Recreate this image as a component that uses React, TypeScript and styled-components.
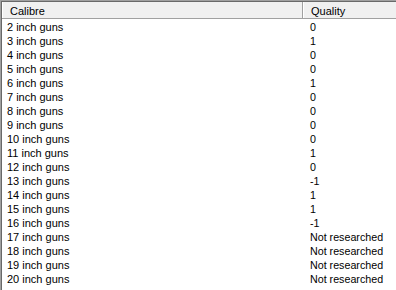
import React from "react";
import styled, { createGlobalStyle } from "styled-components";

const Global = createGlobalStyle`
  html, body { margin: 0; padding: 0; background: #ffffff; }
  body { font-family: "Liberation Sans", Arial, sans-serif; font-size: 11px; }
`;

const ListView = styled.div`
  width: 396px;
  height: 290px;
  box-sizing: border-box;
  overflow: hidden;
  background: #ffffff;
  border-left: 1px solid #a0a0a0;
  border-top: 1px solid #a0a0a0;
  color: #000;
`;

const Inner = styled.div`
  border-left: 1px solid #696969;
  border-top: 1px solid #696969;
  height: 100%;
  box-sizing: border-box;
`;

const Header = styled.div`
  display: grid;
  grid-template-columns: 301px 1fr;
  height: 17px;
  background: #f0f0f0;
  border-bottom: 1px solid #a0a0a0;
  box-sizing: border-box;
`;

const HeaderCell = styled.div<{ $last?: boolean }>`
  padding: 2px 0 0 8px;
  border-right: ${(p) => (p.$last ? "none" : "1px solid #a0a0a0")};
  box-shadow: inset 1px 0 0 #ffffff;
  line-height: 14px;
`;

const Row = styled.div`
  display: grid;
  grid-template-columns: 301px 1fr;
  height: 14px;
  line-height: 14px;
`;

const Cell = styled.div<{ $indent: number; $size: number }>`
  padding-left: ${(p) => p.$indent}px;
  font-size: ${(p) => p.$size}px;
  white-space: nowrap;
`;

const Body = styled.div`
  padding-top: 1px;
`;

const data: [string, string][] = [
  ["2 inch guns", "0"],
  ["3 inch guns", "1"],
  ["4 inch guns", "0"],
  ["5 inch guns", "0"],
  ["6 inch guns", "1"],
  ["7 inch guns", "0"],
  ["8 inch guns", "0"],
  ["9 inch guns", "0"],
  ["10 inch guns", "0"],
  ["11 inch guns", "1"],
  ["12 inch guns", "0"],
  ["13 inch guns", "-1"],
  ["14 inch guns", "1"],
  ["15 inch guns", "1"],
  ["16 inch guns", "-1"],
  ["17 inch guns", "Not researched"],
  ["18 inch guns", "Not researched"],
  ["19 inch guns", "Not researched"],
  ["20 inch guns", "Not researched"],
];

export default function App() {
  return (
    <>
      <Global />
      <ListView>
        <Inner>
          <Header>
            <HeaderCell>Calibre</HeaderCell>
            <HeaderCell $last>Quality</HeaderCell>
          </Header>
          <Body>
            {data.map(([c, q]) => (
              <Row key={c}>
                <Cell $indent={5} $size={11}>{c}</Cell>
                <Cell $indent={7} $size={10.7}>{q}</Cell>
              </Row>
            ))}
          </Body>
        </Inner>
      </ListView>
    </>
  );
}
